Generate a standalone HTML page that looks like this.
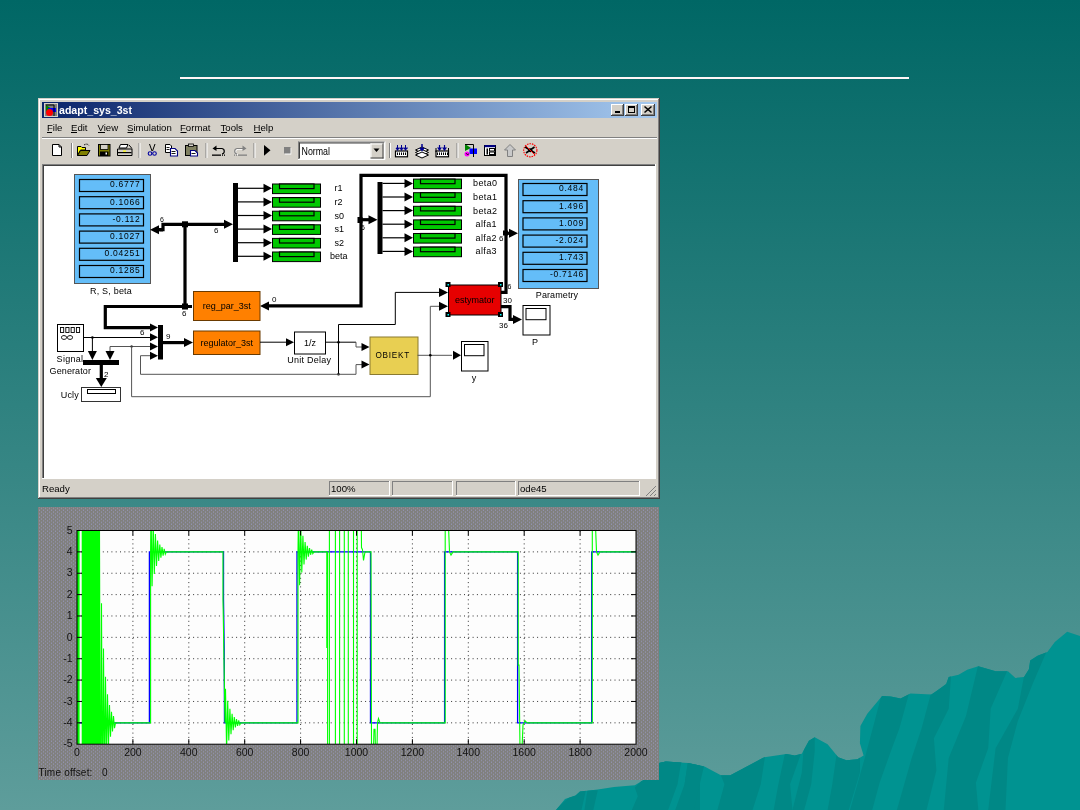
<!DOCTYPE html>
<html><head><meta charset="utf-8"><style>
html,body{margin:0;padding:0;width:1080px;height:810px;overflow:hidden;background:#006765}
svg{display:block}
text{font-family:'Liberation Sans', sans-serif} svg{will-change:transform}
</style></head><body>
<svg width="1080" height="810" viewBox="0 0 1080 810"><defs><linearGradient id="bg" x1="0" y1="0" x2="0" y2="1"><stop offset="0" stop-color="rgb(0,103,101)"/><stop offset="1" stop-color="rgb(94,157,155)"/></linearGradient><linearGradient id="tb" x1="0" y1="0" x2="1" y2="0"><stop offset="0" stop-color="#0a246a"/><stop offset="1" stop-color="#a6caf0"/></linearGradient><pattern id="dots" width="4" height="3.5" patternUnits="userSpaceOnUse"><rect width="4" height="3.5" fill="#80807e"/><rect x="1" y="0.5" width="1" height="1" fill="#9a9ac4"/><rect x="3" y="2.25" width="1" height="1" fill="#9a9ac4"/></pattern></defs><rect x="0" y="0" width="1080" height="810" fill="url(#bg)" stroke="none" stroke-width="1" /><clipPath id="mc"><polygon points="556,810 565,799 575.6,795.6 580,791.6 584.4,791.1 597.8,789.6 614,787.1 634.8,785.2 643.7,780 655,766 659,763 665.8,761.4 688,763 704.5,766.6 720.9,775.3 730.3,775.3 764.3,757.2 786.6,754.1 794.8,755.6 801.8,753.7 808.9,740.8 814.7,737.3 827.6,744.3 838.2,757.2 846.4,760.2 857.4,759.3 863.6,755.6 859.9,743.3 860.4,726 867.3,713.7 882.1,695.9 890.7,696.4 900.6,698.4 910.5,693.4 931.4,694.4 937.6,690.2 946.2,684 948.7,677.1 958.6,674.7 967.2,669.7 978.3,666.3 995.6,671.2 1008,671.2 1015.4,677.9 1024,677.1 1028.9,669.2 1030.2,660.6 1037.6,655.7 1047.4,652 1054.8,642.1 1067.2,631.7 1080,635.9 1080,810"/></clipPath><polygon points="556,810 565,799 575.6,795.6 580,791.6 584.4,791.1 597.8,789.6 614,787.1 634.8,785.2 643.7,780 655,766 659,763 665.8,761.4 688,763 704.5,766.6 720.9,775.3 730.3,775.3 764.3,757.2 786.6,754.1 794.8,755.6 801.8,753.7 808.9,740.8 814.7,737.3 827.6,744.3 838.2,757.2 846.4,760.2 857.4,759.3 863.6,755.6 859.9,743.3 860.4,726 867.3,713.7 882.1,695.9 890.7,696.4 900.6,698.4 910.5,693.4 931.4,694.4 937.6,690.2 946.2,684 948.7,677.1 958.6,674.7 967.2,669.7 978.3,666.3 995.6,671.2 1008,671.2 1015.4,677.9 1024,677.1 1028.9,669.2 1030.2,660.6 1037.6,655.7 1047.4,652 1054.8,642.1 1067.2,631.7 1080,635.9 1080,810" fill="#009391" stroke="none" stroke-width="1" /><g clip-path="url(#mc)" fill="#007f7d"><polygon points="554.8148148148148,809.9259259259259 577.0370370370371,790.3703703703703 585.9259259259259,790.3703703703703 581.4814814814815,809.9259259259259" fill="#008886" stroke="none" stroke-width="1" /><polygon points="587.4074074074074,790.3703703703703 597.7777777777778,790.3703703703703 593.3333333333334,809.9259259259259 584.4444444444445,809.9259259259259" fill="#008886" stroke="none" stroke-width="1" /><polygon points="634.8148148148148,787.4074074074074 661.4814814814815,760.7407407407408 682.2222222222222,760.7407407407408 673.3333333333334,784.4444444444445 664.4444444444445,809.9259259259259 631.8518518518518,809.9259259259259 637.7777777777778,796.2962962962963" fill="#008886" stroke="none" stroke-width="1" /><polygon points="688.1481481481482,760.7407407407408 700.0,762.2222222222222 700.0,809.9259259259259 680.7407407407408,809.9259259259259" fill="#008886" stroke="none" stroke-width="1" /><polygon points="640.0,756.0225140712946 682.2138836772983,756.0225140712946 677.5234521575985,784.1651031894935 668.1425891181989,809.9624765478424 640.0,809.9624765478424" fill="#008886" stroke="none" stroke-width="1" /><polygon points="688.0769230769231,760.7129455909944 704.4934333958724,764.2307692307693 698.6303939962477,788.8555347091933 693.9399624765479,809.9624765478424 675.1782363977486,809.9624765478424 684.5590994371482,784.1651031894935" fill="#008886" stroke="none" stroke-width="1" /><polygon points="719.7373358348968,772.439024390244 765.46904315197,753.6772983114447 760.7786116322702,784.1651031894935 752.5703564727955,809.9624765478424 717.3921200750469,809.9624765478424 724.4277673545967,784.1651031894935" fill="#008886" stroke="none" stroke-width="1" /><polygon points="785.4033771106942,751.3320825515948 801.8198874296436,751.3320825515948 790.093808630394,784.1651031894935 792.439024390244,809.9624765478424 773.6772983114447,809.9624765478424 778.3677298311445,784.1651031894935" fill="#008886" stroke="none" stroke-width="1" /><polygon points="804.1651031894935,741.9512195121952 814.718574108818,734.9155722326454 814.718574108818,751.3320825515948 811.2007504690431,784.1651031894935 804.1651031894935,809.9624765478424 792.439024390244,809.9624765478424 801.8198874296436,772.439024390244" fill="#008886" stroke="none" stroke-width="1" /><polygon points="836.9981238273921,751.3320825515948 859.9812382739212,756.0225140712946 859.9812382739212,772.439024390244 848.7242026266416,809.9624765478424 827.6172607879924,809.9624765478424 832.3076923076923,784.1651031894935" fill="#008886" stroke="none" stroke-width="1" /><polygon points="882.0829220138203,692.6752221125371 909.2300098716684,692.6752221125371 899.3583415597236,728.4600197433366 891.954590325765,748.2033563672261 879.6150049358341,782.7541954590326 872.2112537018756,809.9012833168806 850.0,809.9012833168806 864.8075024679171,758.0750246791708 874.6791707798618,721.0562685093781" fill="#008886" stroke="none" stroke-width="1" /><polygon points="931.4412635735439,691.4412635735439 951.1846001974334,674.1658440276407 948.7166831194472,708.7166831194472 933.9091806515302,738.3316880552813 936.3770977295163,770.4146100691016 926.5054294175716,809.9012833168806 896.8904244817375,809.9012833168806 911.6979269496545,758.0750246791708 921.5695952615993,728.4600197433366" fill="#008886" stroke="none" stroke-width="1" /><polygon points="978.3316880552813,664.2941757156959 1007.9466929911155,669.2300098716684 990.6712734452123,708.7166831194472 988.2033563672261,748.2033563672261 975.8637709772952,782.7541954590326 978.3316880552813,809.9012833168806 943.7808489634748,809.9012833168806 948.7166831194472,758.0750246791708 965.9921026653504,716.1204343534057" fill="#008886" stroke="none" stroke-width="1" /><polygon points="1027.690029615005,656.8904244817375 1047.4333662388945,649.4866732477789 1032.6258637709773,684.0375123395854 1017.8183613030602,721.0562685093781 1007.9466929911155,758.0750246791708 1005.4787759131293,809.9012833168806 988.2033563672261,809.9012833168806 995.6071076011847,748.2033563672261 1017.8183613030602,708.7166831194472" fill="#008886" stroke="none" stroke-width="1" /></g><linearGradient id="mg" x1="0" y1="0" x2="1" y2="0"><stop offset="0" stop-color="#009896" stop-opacity="0"/><stop offset="1" stop-color="#009896" stop-opacity="0.5"/></linearGradient><rect x="180" y="77" width="729" height="2" fill="#fff6f6" stroke="none" stroke-width="1" /><rect x="38" y="98" width="622" height="401" fill="#d4d0c8" stroke="none" stroke-width="1" /><rect x="38" y="98" width="622" height="1" fill="#d4d0c8" stroke="none" stroke-width="1" /><rect x="39" y="99" width="620" height="1" fill="#ffffff" stroke="none" stroke-width="1" /><rect x="39" y="99" width="1" height="399" fill="#ffffff" stroke="none" stroke-width="1" /><rect x="659" y="98" width="1" height="401" fill="#404040" stroke="none" stroke-width="1" /><rect x="38" y="498" width="622" height="1" fill="#404040" stroke="none" stroke-width="1" /><rect x="658" y="99" width="1" height="399" fill="#808080" stroke="none" stroke-width="1" /><rect x="39" y="497" width="620" height="1" fill="#808080" stroke="none" stroke-width="1" /><rect x="42" y="102" width="615" height="16" fill="url(#tb)" stroke="none" stroke-width="1" /><text x="59" y="114" font-size="10.6" text-anchor="start" fill="#fff" font-weight="bold" >adapt_sys_3st</text><rect x="44" y="103" width="14" height="14" fill="#d4d0c8" stroke="none" stroke-width="1" /><rect x="45" y="104" width="12" height="12" fill="#808080" stroke="none" stroke-width="1" /><polygon points="46,105 46,112 52,109" fill="#008000" stroke="none" stroke-width="1" /><rect x="48" y="108" width="8" height="4" fill="#0000ff" stroke="none" stroke-width="1" /><circle cx="49.5" cy="112.5" r="3.5" fill="#ff0000"/><polyline points="46,105 54,105 54,116" fill="none" stroke="#000" stroke-width="1" /><rect x="611" y="104" width="13" height="12" fill="#d4d0c8" stroke="none" stroke-width="1" /><rect x="611" y="104" width="13" height="1" fill="#fff" stroke="none" stroke-width="1" /><rect x="611" y="104" width="1" height="12" fill="#fff" stroke="none" stroke-width="1" /><rect x="611" y="115" width="13" height="1" fill="#404040" stroke="none" stroke-width="1" /><rect x="623" y="104" width="1" height="12" fill="#404040" stroke="none" stroke-width="1" /><rect x="612" y="114" width="11" height="1" fill="#808080" stroke="none" stroke-width="1" /><rect x="622" y="105" width="1" height="10" fill="#808080" stroke="none" stroke-width="1" /><rect x="625" y="104" width="13" height="12" fill="#d4d0c8" stroke="none" stroke-width="1" /><rect x="625" y="104" width="13" height="1" fill="#fff" stroke="none" stroke-width="1" /><rect x="625" y="104" width="1" height="12" fill="#fff" stroke="none" stroke-width="1" /><rect x="625" y="115" width="13" height="1" fill="#404040" stroke="none" stroke-width="1" /><rect x="637" y="104" width="1" height="12" fill="#404040" stroke="none" stroke-width="1" /><rect x="626" y="114" width="11" height="1" fill="#808080" stroke="none" stroke-width="1" /><rect x="636" y="105" width="1" height="10" fill="#808080" stroke="none" stroke-width="1" /><rect x="641" y="104" width="14" height="12" fill="#d4d0c8" stroke="none" stroke-width="1" /><rect x="641" y="104" width="14" height="1" fill="#fff" stroke="none" stroke-width="1" /><rect x="641" y="104" width="1" height="12" fill="#fff" stroke="none" stroke-width="1" /><rect x="641" y="115" width="14" height="1" fill="#404040" stroke="none" stroke-width="1" /><rect x="654" y="104" width="1" height="12" fill="#404040" stroke="none" stroke-width="1" /><rect x="642" y="114" width="12" height="1" fill="#808080" stroke="none" stroke-width="1" /><rect x="653" y="105" width="1" height="10" fill="#808080" stroke="none" stroke-width="1" /><rect x="615" y="111" width="5" height="2" fill="#000" stroke="none" stroke-width="1" /><rect x="628.5" y="106.5" width="6" height="6" fill="none" stroke="#000" stroke-width="1" /><rect x="628" y="106" width="7" height="2" fill="#000" stroke="none" stroke-width="1" /><line x1="644.5" y1="106.5" x2="651.5" y2="112.5" stroke="#000" stroke-width="1.6" /><line x1="651.5" y1="106.5" x2="644.5" y2="112.5" stroke="#000" stroke-width="1.6" /><text x="47" y="131" font-size="9.6" text-anchor="start" fill="#000" font-weight="normal" >File</text><text x="71" y="131" font-size="9.6" text-anchor="start" fill="#000" font-weight="normal" >Edit</text><text x="97.5" y="131" font-size="9.6" text-anchor="start" fill="#000" font-weight="normal" >View</text><text x="127" y="131" font-size="9.6" text-anchor="start" fill="#000" font-weight="normal" >Simulation</text><text x="180" y="131" font-size="9.6" text-anchor="start" fill="#000" font-weight="normal" >Format</text><text x="220.5" y="131" font-size="9.6" text-anchor="start" fill="#000" font-weight="normal" >Tools</text><text x="253.5" y="131" font-size="9.6" text-anchor="start" fill="#000" font-weight="normal" >Help</text><rect x="47" y="132" width="5" height="1" fill="#000" stroke="none" stroke-width="1" /><rect x="71" y="132" width="6" height="1" fill="#000" stroke="none" stroke-width="1" /><rect x="98" y="132" width="7" height="1" fill="#000" stroke="none" stroke-width="1" /><rect x="127.5" y="132" width="6" height="1" fill="#000" stroke="none" stroke-width="1" /><rect x="180.5" y="132" width="6" height="1" fill="#000" stroke="none" stroke-width="1" /><rect x="221" y="132" width="6" height="1" fill="#000" stroke="none" stroke-width="1" /><rect x="254" y="132" width="7" height="1" fill="#000" stroke="none" stroke-width="1" /><rect x="42" y="137" width="615" height="1" fill="#808080" stroke="none" stroke-width="1" /><rect x="42" y="138" width="615" height="1" fill="#ffffff" stroke="none" stroke-width="1" /><rect x="71" y="143" width="1" height="15" fill="#808080" stroke="none" stroke-width="1" /><rect x="72" y="143" width="1" height="15" fill="#ffffff" stroke="none" stroke-width="1" /><rect x="138.5" y="143" width="1" height="15" fill="#808080" stroke="none" stroke-width="1" /><rect x="139.5" y="143" width="1" height="15" fill="#ffffff" stroke="none" stroke-width="1" /><rect x="205.5" y="143" width="1" height="15" fill="#808080" stroke="none" stroke-width="1" /><rect x="206.5" y="143" width="1" height="15" fill="#ffffff" stroke="none" stroke-width="1" /><rect x="253.5" y="143" width="1" height="15" fill="#808080" stroke="none" stroke-width="1" /><rect x="254.5" y="143" width="1" height="15" fill="#ffffff" stroke="none" stroke-width="1" /><rect x="389" y="143" width="1" height="15" fill="#808080" stroke="none" stroke-width="1" /><rect x="390" y="143" width="1" height="15" fill="#ffffff" stroke="none" stroke-width="1" /><rect x="456.5" y="143" width="1" height="15" fill="#808080" stroke="none" stroke-width="1" /><rect x="457.5" y="143" width="1" height="15" fill="#ffffff" stroke="none" stroke-width="1" /><path d="M52.5,144.5 H59 L61.5,147 V155.5 H52.5 Z" fill="#fff" stroke="#000" stroke-width="1"/><path d="M59,144.5 V147 H61.5" fill="none" stroke="#000" stroke-width="1"/><path d="M77.5,146.5 H81 L82,147.5 H85.5 V150 H80.5 L77.5,155.5 Z" fill="#ffff00" stroke="#000" stroke-width="1"/><path d="M77.5,155.5 L80.5,150.5 H90 L87,155.5 Z" fill="#808000" stroke="#000" stroke-width="1"/><path d="M84,145 Q87,143 89,145.5" fill="none" stroke="#000" stroke-width="1" stroke-dasharray="1.5,1"/><rect x="98.5" y="144.5" width="11.5" height="11.5" fill="#808000" stroke="#000" stroke-width="1" /><rect x="100.5" y="144.5" width="7.5" height="5" fill="#d4d0c8" stroke="#000" stroke-width="0.8" /><rect x="100" y="151.5" width="8.5" height="4.5" fill="#000" stroke="none" stroke-width="1" /><rect x="105.5" y="152.5" width="1.5" height="2" fill="#fff" stroke="none" stroke-width="1" /><path d="M120.5,144.5 H128 L126.5,148 H119 Z" fill="#fff" stroke="#000" stroke-width="1"/><path d="M117.5,149 H132 V155.5 H117.5 Z" fill="#d4d0c8" stroke="#000" stroke-width="1"/><rect x="118" y="152" width="13.5" height="1.2" fill="#000" stroke="none" stroke-width="1" /><rect x="123" y="150.5" width="3" height="1.2" fill="#ffff00" stroke="none" stroke-width="1" /><path d="M129,145 L132,148.5" stroke="#000" stroke-width="1"/><path d="M149.5,144 L152,151 M155,144 L152.5,151" stroke="#000" stroke-width="1" fill="none"/><circle cx="150" cy="153.5" r="1.8" fill="none" stroke="#0000a0" stroke-width="1.1"/><circle cx="154.5" cy="153.5" r="1.8" fill="none" stroke="#0000a0" stroke-width="1.1"/><path d="M165.5,144.5 H170 L171.5,146 V152.5 H165.5 Z" fill="#fff" stroke="#000" stroke-width="1"/><rect x="166.5" y="147" width="3" height="0.9" fill="#000" stroke="none" stroke-width="1" /><rect x="166.5" y="149" width="3" height="0.9" fill="#000" stroke="none" stroke-width="1" /><path d="M170.5,148.5 H175 L177.5,151 V156 H170.5 Z" fill="#fff" stroke="#000080" stroke-width="1.1"/><rect x="171.5" y="151" width="4" height="0.9" fill="#000" stroke="none" stroke-width="1" /><rect x="171.5" y="153" width="4" height="0.9" fill="#000" stroke="none" stroke-width="1" /><rect x="185.5" y="145.5" width="11.5" height="10" fill="#808060" stroke="#000" stroke-width="1" /><rect x="188.5" y="144" width="5" height="2.5" fill="#d4d0c8" stroke="#000" stroke-width="0.8" /><path d="M190.5,150.5 H195 L197.5,153 V156 H190.5 Z" fill="#fff" stroke="#000080" stroke-width="1.1"/><rect x="191.5" y="153" width="4" height="0.9" fill="#000" stroke="none" stroke-width="1" /><path d="M216,148.5 H222 A2.8,2.8 0 0 1 222,154" fill="none" stroke="#000" stroke-width="1.2"/><polygon points="212.5,148.5 216.5,145.5 216.5,151" fill="#000" stroke="none" stroke-width="1" /><rect x="212" y="154.5" width="9" height="1.3" fill="#000" stroke="none" stroke-width="1" /><rect x="222" y="154.5" width="1" height="1.3" fill="#000" stroke="none" stroke-width="1" /><rect x="224" y="154.5" width="1" height="1.3" fill="#000" stroke="none" stroke-width="1" /><path d="M243,148.5 H237 A2.8,2.8 0 0 0 237,154" fill="none" stroke="#fff" stroke-width="1.2" transform="translate(0.7,0.7)"/><path d="M243,148.5 H237 A2.8,2.8 0 0 0 237,154" fill="none" stroke="#808080" stroke-width="1.2"/><polygon points="246.5,148.5 242.5,145.5 242.5,151" fill="#808080" stroke="none" stroke-width="1" /><rect x="238" y="154.5" width="9" height="1.3" fill="#808080" stroke="none" stroke-width="1" /><rect x="234" y="154.5" width="1" height="1.3" fill="#808080" stroke="none" stroke-width="1" /><rect x="236" y="154.5" width="1" height="1.3" fill="#808080" stroke="none" stroke-width="1" /><polygon points="264,145 270.5,150.3 264,155.8" fill="#000" stroke="none" stroke-width="1" /><rect x="284.8" y="148" width="6.5" height="6.5" fill="#fff" stroke="none" stroke-width="1" /><rect x="284" y="147" width="6.5" height="6.5" fill="#808080" stroke="none" stroke-width="1" /><rect x="298" y="141.5" width="87" height="18" fill="#fff" stroke="none" stroke-width="1" /><rect x="298" y="141.5" width="87" height="1" fill="#808080" stroke="none" stroke-width="1" /><rect x="298" y="141.5" width="1" height="18" fill="#808080" stroke="none" stroke-width="1" /><rect x="299" y="142.5" width="85" height="1" fill="#404040" stroke="none" stroke-width="1" /><rect x="299" y="142.5" width="1" height="16" fill="#404040" stroke="none" stroke-width="1" /><rect x="298" y="159" width="87" height="1" fill="#fff" stroke="none" stroke-width="1" /><rect x="384.5" y="141.5" width="1" height="18" fill="#fff" stroke="none" stroke-width="1" /><rect x="370.5" y="143.5" width="13" height="15" fill="#d4d0c8" stroke="none" stroke-width="1" /><rect x="370.5" y="143.5" width="13" height="1" fill="#fff" stroke="none" stroke-width="1" /><rect x="370.5" y="143.5" width="1" height="15" fill="#fff" stroke="none" stroke-width="1" /><rect x="370.5" y="157.5" width="13" height="1" fill="#404040" stroke="none" stroke-width="1" /><rect x="382.5" y="143.5" width="1" height="15" fill="#404040" stroke="none" stroke-width="1" /><polygon points="373.5,148.5 379.5,148.5 376.5,152" fill="#000" stroke="none" stroke-width="1" /><text x="301.5" y="155" font-size="11.5" text-anchor="start" fill="#000" font-weight="normal" textLength="28.5" lengthAdjust="spacingAndGlyphs">Normal</text><rect x="395.5" y="151" width="12" height="5.8" fill="#fff" stroke="#000" stroke-width="1.2" /><rect x="397" y="152.5" width="1" height="2.5" fill="#000" stroke="none" stroke-width="1" /><rect x="399" y="152.5" width="1" height="2.5" fill="#000" stroke="none" stroke-width="1" /><rect x="401" y="152.5" width="1" height="2.5" fill="#000" stroke="none" stroke-width="1" /><rect x="403" y="152.5" width="1" height="2.5" fill="#000" stroke="none" stroke-width="1" /><rect x="405" y="152.5" width="1" height="2.5" fill="#000" stroke="none" stroke-width="1" /><line x1="397.5" y1="145" x2="397.5" y2="150" stroke="#000090" stroke-width="1" /><polygon points="395.5,148 399.5,148 397.5,151" fill="#000090" stroke="none" stroke-width="1" /><line x1="401.5" y1="145" x2="401.5" y2="150" stroke="#000090" stroke-width="1" /><polygon points="399.5,148 403.5,148 401.5,151" fill="#000090" stroke="none" stroke-width="1" /><line x1="405.5" y1="145" x2="405.5" y2="150" stroke="#000090" stroke-width="1" /><polygon points="403.5,148 407.5,148 405.5,151" fill="#000090" stroke="none" stroke-width="1" /><line x1="396" y1="148" x2="408" y2="148" stroke="#000090" stroke-width="0.8" /><polygon points="415.5,150 422,147 428.5,150 422,153" fill="#fff" stroke="#000" stroke-width="1" /><polygon points="415.5,152.5 422,149.5 428.5,152.5 422,155.5" fill="#fff" stroke="#000" stroke-width="1" /><polygon points="415.5,155 422,152 428.5,155 422,158" fill="#fff" stroke="#000" stroke-width="1" /><line x1="422" y1="144" x2="422" y2="150" stroke="#000090" stroke-width="1.5" /><polygon points="419,148 425,148 422,151.5" fill="#000090" stroke="none" stroke-width="1" /><rect x="436.0" y="151" width="12.5" height="5.8" fill="#fff" stroke="#000" stroke-width="1.2" /><rect x="437" y="152.5" width="1" height="2.5" fill="#000" stroke="none" stroke-width="1" /><rect x="439" y="152.5" width="1" height="2.5" fill="#000" stroke="none" stroke-width="1" /><rect x="441" y="152.5" width="1" height="2.5" fill="#000" stroke="none" stroke-width="1" /><rect x="443" y="152.5" width="1" height="2.5" fill="#000" stroke="none" stroke-width="1" /><rect x="445" y="152.5" width="1" height="2.5" fill="#000" stroke="none" stroke-width="1" /><rect x="447" y="152.5" width="1" height="2.5" fill="#000" stroke="none" stroke-width="1" /><rect x="435.5" y="148" width="1" height="4" fill="#000" stroke="none" stroke-width="1" /><rect x="448" y="148" width="1" height="4" fill="#000" stroke="none" stroke-width="1" /><line x1="439.5" y1="145" x2="439.5" y2="150" stroke="#000090" stroke-width="1.2" /><polygon points="437.0,147.5 442.0,147.5 439.5,151" fill="#000090" stroke="none" stroke-width="1" /><line x1="444.5" y1="145" x2="444.5" y2="150" stroke="#000090" stroke-width="1.2" /><polygon points="442.0,147.5 447.0,147.5 444.5,151" fill="#000090" stroke="none" stroke-width="1" /><polygon points="465,144 465,151 471,148" fill="#008000" stroke="none" stroke-width="1" /><rect x="469.5" y="148.5" width="7.5" height="5.5" fill="#0000ff" stroke="none" stroke-width="1" /><circle cx="467" cy="154" r="2.5" fill="#ff00ff"/><polyline points="465,144.5 473.5,144.5 473.5,157" fill="none" stroke="#000" stroke-width="1" /><path d="M466,153 L467,154.5 L469,154" stroke="#000" stroke-width="0.8" fill="none"/><rect x="484.5" y="145.5" width="11" height="10" fill="#fff" stroke="#000" stroke-width="1" /><rect x="484.5" y="145" width="11" height="2.2" fill="#000080" stroke="none" stroke-width="1" /><rect x="486.5" y="148.5" width="1.5" height="6" fill="#000" stroke="none" stroke-width="1" /><rect x="489.5" y="148.5" width="5" height="2.5" fill="none" stroke="#000" stroke-width="1" /><rect x="489.5" y="152" width="5" height="2.5" fill="none" stroke="#000" stroke-width="1" /><polygon points="504.5,150 510,144.5 515.5,150 512.5,150 512.5,156.5 507.5,156.5 507.5,150" fill="#c8c8c8" stroke="#808080" stroke-width="1" /><circle cx="530.3" cy="150.3" r="6.6" fill="none" stroke="#ff0000" stroke-width="1.1" stroke-dasharray="1.6,0.9"/><path d="M525,147 L535,153 M526,153 L534.5,147" stroke="#000" stroke-width="1.6"/><circle cx="530.3" cy="150.3" r="2" fill="#000"/><line x1="525.5" y1="145.5" x2="535" y2="155" stroke="#ff0000" stroke-width="1" /><rect x="42" y="164" width="614" height="315" fill="#ffffff" stroke="none" stroke-width="1" /><rect x="42" y="164" width="614" height="1" fill="#808080" stroke="none" stroke-width="1" /><rect x="42" y="164" width="1" height="315" fill="#808080" stroke="none" stroke-width="1" /><rect x="43" y="165" width="612" height="1" fill="#404040" stroke="none" stroke-width="1" /><rect x="43" y="165" width="1" height="313" fill="#404040" stroke="none" stroke-width="1" /><rect x="655" y="164" width="1" height="315" fill="#ffffff" stroke="none" stroke-width="1" /><rect x="42" y="478" width="614" height="1" fill="#ffffff" stroke="none" stroke-width="1" /><text x="42" y="492" font-size="9.6" text-anchor="start" fill="#000" font-weight="normal" >Ready</text><rect x="329" y="481" width="61" height="15" fill="#d4d0c8" stroke="none" stroke-width="1" /><rect x="329" y="481" width="61" height="1" fill="#808080" stroke="none" stroke-width="1" /><rect x="329" y="481" width="1" height="15" fill="#808080" stroke="none" stroke-width="1" /><rect x="329" y="495" width="61" height="1" fill="#ffffff" stroke="none" stroke-width="1" /><rect x="389" y="481" width="1" height="15" fill="#ffffff" stroke="none" stroke-width="1" /><text x="331" y="492" font-size="9.6" text-anchor="start" fill="#000" font-weight="normal" >100%</text><rect x="392" y="481" width="61" height="15" fill="#d4d0c8" stroke="none" stroke-width="1" /><rect x="392" y="481" width="61" height="1" fill="#808080" stroke="none" stroke-width="1" /><rect x="392" y="481" width="1" height="15" fill="#808080" stroke="none" stroke-width="1" /><rect x="392" y="495" width="61" height="1" fill="#ffffff" stroke="none" stroke-width="1" /><rect x="452" y="481" width="1" height="15" fill="#ffffff" stroke="none" stroke-width="1" /><rect x="456" y="481" width="60" height="15" fill="#d4d0c8" stroke="none" stroke-width="1" /><rect x="456" y="481" width="60" height="1" fill="#808080" stroke="none" stroke-width="1" /><rect x="456" y="481" width="1" height="15" fill="#808080" stroke="none" stroke-width="1" /><rect x="456" y="495" width="60" height="1" fill="#ffffff" stroke="none" stroke-width="1" /><rect x="515" y="481" width="1" height="15" fill="#ffffff" stroke="none" stroke-width="1" /><rect x="518" y="481" width="122" height="15" fill="#d4d0c8" stroke="none" stroke-width="1" /><rect x="518" y="481" width="122" height="1" fill="#808080" stroke="none" stroke-width="1" /><rect x="518" y="481" width="1" height="15" fill="#808080" stroke="none" stroke-width="1" /><rect x="518" y="495" width="122" height="1" fill="#ffffff" stroke="none" stroke-width="1" /><rect x="639" y="481" width="1" height="15" fill="#ffffff" stroke="none" stroke-width="1" /><text x="520" y="492" font-size="9.6" text-anchor="start" fill="#000" font-weight="normal" >ode45</text><line x1="646" y1="496" x2="656" y2="486" stroke="#808080" stroke-width="1" /><line x1="650" y1="496" x2="656" y2="490" stroke="#808080" stroke-width="1" /><line x1="654" y1="496" x2="656" y2="494" stroke="#808080" stroke-width="1" /><rect x="74.5" y="174.5" width="76" height="109" fill="#64bdf8" stroke="#555" stroke-width="1" /><rect x="79.5" y="179.5" width="64" height="12" fill="#64bdf8" stroke="#000" stroke-width="1.2" /><text x="140.5" y="187.3" font-size="8.5" text-anchor="end" fill="#000" font-weight="normal" letter-spacing="0.75">0.6777</text><rect x="79.5" y="196.7" width="64" height="12" fill="#64bdf8" stroke="#000" stroke-width="1.2" /><text x="140.5" y="204.5" font-size="8.5" text-anchor="end" fill="#000" font-weight="normal" letter-spacing="0.75">0.1066</text><rect x="79.5" y="213.9" width="64" height="12" fill="#64bdf8" stroke="#000" stroke-width="1.2" /><text x="140.5" y="221.70000000000002" font-size="8.5" text-anchor="end" fill="#000" font-weight="normal" letter-spacing="0.75">-0.112</text><rect x="79.5" y="231.1" width="64" height="12" fill="#64bdf8" stroke="#000" stroke-width="1.2" /><text x="140.5" y="238.9" font-size="8.5" text-anchor="end" fill="#000" font-weight="normal" letter-spacing="0.75">0.1027</text><rect x="79.5" y="248.3" width="64" height="12" fill="#64bdf8" stroke="#000" stroke-width="1.2" /><text x="140.5" y="256.1" font-size="8.5" text-anchor="end" fill="#000" font-weight="normal" letter-spacing="0.75">0.04251</text><rect x="79.5" y="265.5" width="64" height="12" fill="#64bdf8" stroke="#000" stroke-width="1.2" /><text x="140.5" y="273.3" font-size="8.5" text-anchor="end" fill="#000" font-weight="normal" letter-spacing="0.75">0.1285</text><text x="111" y="293.7" font-size="9" text-anchor="middle" fill="#000" font-weight="normal" letter-spacing="0.2">R, S, beta</text><rect x="518.5" y="179.5" width="80" height="109" fill="#64bdf8" stroke="#555" stroke-width="1" /><rect x="523.0" y="183.5" width="64.0" height="12" fill="#64bdf8" stroke="#000" stroke-width="1.2" /><text x="584.0" y="191.3" font-size="8.5" text-anchor="end" fill="#000" font-weight="normal" letter-spacing="0.75">0.484</text><rect x="523.0" y="200.7" width="64.0" height="12" fill="#64bdf8" stroke="#000" stroke-width="1.2" /><text x="584.0" y="208.5" font-size="8.5" text-anchor="end" fill="#000" font-weight="normal" letter-spacing="0.75">1.496</text><rect x="523.0" y="217.9" width="64.0" height="12" fill="#64bdf8" stroke="#000" stroke-width="1.2" /><text x="584.0" y="225.70000000000002" font-size="8.5" text-anchor="end" fill="#000" font-weight="normal" letter-spacing="0.75">1.009</text><rect x="523.0" y="235.1" width="64.0" height="12" fill="#64bdf8" stroke="#000" stroke-width="1.2" /><text x="584.0" y="242.9" font-size="8.5" text-anchor="end" fill="#000" font-weight="normal" letter-spacing="0.75">-2.024</text><rect x="523.0" y="252.3" width="64.0" height="12" fill="#64bdf8" stroke="#000" stroke-width="1.2" /><text x="584.0" y="260.1" font-size="8.5" text-anchor="end" fill="#000" font-weight="normal" letter-spacing="0.75">1.743</text><rect x="523.0" y="269.5" width="64.0" height="12" fill="#64bdf8" stroke="#000" stroke-width="1.2" /><text x="584.0" y="277.3" font-size="8.5" text-anchor="end" fill="#000" font-weight="normal" letter-spacing="0.75">-0.7146</text><text x="557" y="298" font-size="9" text-anchor="middle" fill="#000" font-weight="normal" letter-spacing="0.1">Parametry</text><rect x="233" y="183" width="5" height="79" fill="#000" stroke="none" stroke-width="1" /><line x1="238" y1="188.3" x2="264" y2="188.3" stroke="#000" stroke-width="1.2" /><polygon points="263.5,183.8 272,188.3 263.5,192.8" fill="#000" stroke="none" stroke-width="1" /><rect x="272.5" y="184.0" width="48" height="9.6" fill="#00c800" stroke="#000" stroke-width="1" /><rect x="279.5" y="184.0" width="34.5" height="4.6" fill="#00c800" stroke="#000" stroke-width="1.2" /><text x="334.5" y="191.3" font-size="9" text-anchor="start" fill="#000" font-weight="normal" >r1</text><line x1="238" y1="201.9" x2="264" y2="201.9" stroke="#000" stroke-width="1.2" /><polygon points="263.5,197.4 272,201.9 263.5,206.4" fill="#000" stroke="none" stroke-width="1" /><rect x="272.5" y="197.6" width="48" height="9.6" fill="#00c800" stroke="#000" stroke-width="1" /><rect x="279.5" y="197.6" width="34.5" height="4.6" fill="#00c800" stroke="#000" stroke-width="1.2" /><text x="334.5" y="204.9" font-size="9" text-anchor="start" fill="#000" font-weight="normal" >r2</text><line x1="238" y1="215.5" x2="264" y2="215.5" stroke="#000" stroke-width="1.2" /><polygon points="263.5,211.0 272,215.5 263.5,220.0" fill="#000" stroke="none" stroke-width="1" /><rect x="272.5" y="211.2" width="48" height="9.6" fill="#00c800" stroke="#000" stroke-width="1" /><rect x="279.5" y="211.2" width="34.5" height="4.6" fill="#00c800" stroke="#000" stroke-width="1.2" /><text x="334.5" y="218.5" font-size="9" text-anchor="start" fill="#000" font-weight="normal" >s0</text><line x1="238" y1="229.10000000000002" x2="264" y2="229.10000000000002" stroke="#000" stroke-width="1.2" /><polygon points="263.5,224.60000000000002 272,229.10000000000002 263.5,233.60000000000002" fill="#000" stroke="none" stroke-width="1" /><rect x="272.5" y="224.8" width="48" height="9.6" fill="#00c800" stroke="#000" stroke-width="1" /><rect x="279.5" y="224.8" width="34.5" height="4.6" fill="#00c800" stroke="#000" stroke-width="1.2" /><text x="334.5" y="232.10000000000002" font-size="9" text-anchor="start" fill="#000" font-weight="normal" >s1</text><line x1="238" y1="242.70000000000002" x2="264" y2="242.70000000000002" stroke="#000" stroke-width="1.2" /><polygon points="263.5,238.20000000000002 272,242.70000000000002 263.5,247.20000000000002" fill="#000" stroke="none" stroke-width="1" /><rect x="272.5" y="238.4" width="48" height="9.6" fill="#00c800" stroke="#000" stroke-width="1" /><rect x="279.5" y="238.4" width="34.5" height="4.6" fill="#00c800" stroke="#000" stroke-width="1.2" /><text x="334.5" y="245.70000000000002" font-size="9" text-anchor="start" fill="#000" font-weight="normal" >s2</text><line x1="238" y1="256.3" x2="264" y2="256.3" stroke="#000" stroke-width="1.2" /><polygon points="263.5,251.8 272,256.3 263.5,260.8" fill="#000" stroke="none" stroke-width="1" /><rect x="272.5" y="252.0" width="48" height="9.6" fill="#00c800" stroke="#000" stroke-width="1" /><rect x="279.5" y="252.0" width="34.5" height="4.6" fill="#00c800" stroke="#000" stroke-width="1.2" /><text x="330" y="259.3" font-size="9" text-anchor="start" fill="#000" font-weight="normal" >beta</text><rect x="377.5" y="182" width="5" height="72" fill="#000" stroke="none" stroke-width="1" /><line x1="382.5" y1="183.4" x2="405" y2="183.4" stroke="#000" stroke-width="1.2" /><polygon points="404.5,178.9 413,183.4 404.5,187.9" fill="#000" stroke="none" stroke-width="1" /><rect x="413.5" y="179.1" width="48" height="9.6" fill="#00c800" stroke="#000" stroke-width="1" /><rect x="420.5" y="179.1" width="34.5" height="4.6" fill="#00c800" stroke="#000" stroke-width="1.2" /><text x="473" y="186.4" font-size="9" text-anchor="start" fill="#000" font-weight="normal" letter-spacing="0.4">beta0</text><line x1="382.5" y1="197.0" x2="405" y2="197.0" stroke="#000" stroke-width="1.2" /><polygon points="404.5,192.5 413,197.0 404.5,201.5" fill="#000" stroke="none" stroke-width="1" /><rect x="413.5" y="192.7" width="48" height="9.6" fill="#00c800" stroke="#000" stroke-width="1" /><rect x="420.5" y="192.7" width="34.5" height="4.6" fill="#00c800" stroke="#000" stroke-width="1.2" /><text x="473" y="200.0" font-size="9" text-anchor="start" fill="#000" font-weight="normal" letter-spacing="0.4">beta1</text><line x1="382.5" y1="210.6" x2="405" y2="210.6" stroke="#000" stroke-width="1.2" /><polygon points="404.5,206.1 413,210.6 404.5,215.1" fill="#000" stroke="none" stroke-width="1" /><rect x="413.5" y="206.29999999999998" width="48" height="9.6" fill="#00c800" stroke="#000" stroke-width="1" /><rect x="420.5" y="206.29999999999998" width="34.5" height="4.6" fill="#00c800" stroke="#000" stroke-width="1.2" /><text x="473" y="213.6" font-size="9" text-anchor="start" fill="#000" font-weight="normal" letter-spacing="0.4">beta2</text><line x1="382.5" y1="224.2" x2="405" y2="224.2" stroke="#000" stroke-width="1.2" /><polygon points="404.5,219.7 413,224.2 404.5,228.7" fill="#000" stroke="none" stroke-width="1" /><rect x="413.5" y="219.89999999999998" width="48" height="9.6" fill="#00c800" stroke="#000" stroke-width="1" /><rect x="420.5" y="219.89999999999998" width="34.5" height="4.6" fill="#00c800" stroke="#000" stroke-width="1.2" /><text x="475.5" y="227.2" font-size="9" text-anchor="start" fill="#000" font-weight="normal" letter-spacing="0.4">alfa1</text><line x1="382.5" y1="237.8" x2="405" y2="237.8" stroke="#000" stroke-width="1.2" /><polygon points="404.5,233.3 413,237.8 404.5,242.3" fill="#000" stroke="none" stroke-width="1" /><rect x="413.5" y="233.5" width="48" height="9.6" fill="#00c800" stroke="#000" stroke-width="1" /><rect x="420.5" y="233.5" width="34.5" height="4.6" fill="#00c800" stroke="#000" stroke-width="1.2" /><text x="475.5" y="240.8" font-size="9" text-anchor="start" fill="#000" font-weight="normal" letter-spacing="0.4">alfa2</text><line x1="382.5" y1="251.4" x2="405" y2="251.4" stroke="#000" stroke-width="1.2" /><polygon points="404.5,246.9 413,251.4 404.5,255.9" fill="#000" stroke="none" stroke-width="1" /><rect x="413.5" y="247.1" width="48" height="9.6" fill="#00c800" stroke="#000" stroke-width="1" /><rect x="420.5" y="247.1" width="34.5" height="4.6" fill="#00c800" stroke="#000" stroke-width="1.2" /><text x="475.5" y="254.4" font-size="9" text-anchor="start" fill="#000" font-weight="normal" letter-spacing="0.4">alfa3</text><polyline points="160,229.7 163,229.7 163,224.3 225,224.3" fill="none" stroke="#000" stroke-width="3.2" /><polygon points="159,225.2 150,229.7 159,234.2" fill="#000" stroke="none" stroke-width="1" /><rect x="157" y="228" width="6" height="3.4" fill="#000" stroke="none" stroke-width="1" /><polygon points="224,219.8 233,224.3 224,228.8" fill="#000" stroke="none" stroke-width="1" /><rect x="182" y="221.3" width="6" height="6" fill="#000" stroke="none" stroke-width="1" /><line x1="185" y1="224" x2="185" y2="306.5" stroke="#000" stroke-width="3.2" /><rect x="182" y="303.5" width="6" height="6" fill="#000" stroke="none" stroke-width="1" /><text x="160" y="222" font-size="7" text-anchor="start" fill="#000" font-weight="normal" >6</text><text x="214" y="232.5" font-size="8" text-anchor="start" fill="#000" font-weight="normal" >6</text><polyline points="192,306.5 105.3,306.5 105.3,327.6 150,327.6" fill="none" stroke="#000" stroke-width="3.2" /><text x="182" y="316" font-size="8" text-anchor="start" fill="#000" font-weight="normal" >6</text><polyline points="268,305.9 361,305.9 361,175.4 506,175.4 506,292.3 500,292.3" fill="none" stroke="#000" stroke-width="3.2" /><polygon points="269,301.4 260,305.9 269,310.4" fill="#000" stroke="none" stroke-width="1" /><text x="272" y="302" font-size="8" text-anchor="start" fill="#000" font-weight="normal" >0</text><rect x="357.5" y="217" width="5" height="6" fill="#000" stroke="none" stroke-width="1" /><line x1="361" y1="219.7" x2="370" y2="219.7" stroke="#000" stroke-width="3.2" /><polygon points="368.5,215.2 377.5,219.7 368.5,224.2" fill="#000" stroke="none" stroke-width="1" /><text x="360.5" y="229.5" font-size="8" text-anchor="start" fill="#000" font-weight="normal" >6</text><rect x="503" y="230.5" width="5" height="5" fill="#000" stroke="none" stroke-width="1" /><line x1="506" y1="233.3" x2="510" y2="233.3" stroke="#000" stroke-width="3.2" /><polygon points="509,228.8 518,233.3 509,237.8" fill="#000" stroke="none" stroke-width="1" /><text x="499" y="241" font-size="8" text-anchor="start" fill="#000" font-weight="normal" >6</text><rect x="193.5" y="291.5" width="66.5" height="29" fill="#ff8000" stroke="#6a3a00" stroke-width="1" /><text x="226.75" y="309.0" font-size="9" text-anchor="middle" fill="#000" font-weight="normal" >reg_par_3st</text><rect x="193.5" y="331.0" width="66.5" height="23.5" fill="#ff8000" stroke="#6a3a00" stroke-width="1" /><text x="226.75" y="345.75" font-size="9" text-anchor="middle" fill="#000" font-weight="normal" >regulator_3st</text><rect x="294.5" y="332.0" width="31" height="22.0" fill="#ffffff" stroke="#000" stroke-width="1" /><text x="310.0" y="346.0" font-size="9" text-anchor="middle" fill="#000" font-weight="normal" >1/z</text><text x="309.3" y="363" font-size="9" text-anchor="middle" fill="#000" font-weight="normal" letter-spacing="0.25">Unit Delay</text><rect x="370.0" y="337.0" width="48.0" height="37.5" fill="#e8cf52" stroke="#8a7a30" stroke-width="1" /><text x="394.0" y="358.75" font-size="8" text-anchor="middle" fill="#000" font-weight="normal" ></text><text x="375.5" y="358.2" font-size="8.2" text-anchor="start" fill="#000" font-weight="normal" font-weight="bold" letter-spacing="0.75">OBIEKT</text><rect x="448.5" y="285.0" width="52.5" height="30.0" fill="#e60000" stroke="#000" stroke-width="1" /><text x="474.75" y="303.0" font-size="9" text-anchor="middle" fill="#000" font-weight="normal" >estymator</text><rect x="445.5" y="282.0" width="5" height="5" fill="#000" stroke="none" stroke-width="1" /><rect x="447.5" y="284.0" width="1.5" height="1.5" fill="#00ffff" stroke="none" stroke-width="1" /><rect x="498.0" y="282.0" width="5" height="5" fill="#000" stroke="none" stroke-width="1" /><rect x="500.0" y="284.0" width="1.5" height="1.5" fill="#00ffff" stroke="none" stroke-width="1" /><rect x="445.5" y="312.0" width="5" height="5" fill="#000" stroke="none" stroke-width="1" /><rect x="447.5" y="314.0" width="1.5" height="1.5" fill="#00ffff" stroke="none" stroke-width="1" /><rect x="498.0" y="312.0" width="5" height="5" fill="#000" stroke="none" stroke-width="1" /><rect x="500.0" y="314.0" width="1.5" height="1.5" fill="#00ffff" stroke="none" stroke-width="1" /><text x="507.5" y="289" font-size="7" text-anchor="start" fill="#000" font-weight="normal" >6</text><text x="503" y="303" font-size="8" text-anchor="start" fill="#000" font-weight="normal" >30</text><text x="499" y="328" font-size="8" text-anchor="start" fill="#000" font-weight="normal" >36</text><polyline points="501,306.7 510,306.7 510,319.4 514,319.4" fill="none" stroke="#000" stroke-width="3.2" /><polygon points="513,314.9 522,319.4 513,323.9" fill="#000" stroke="none" stroke-width="1" /><rect x="523.0" y="305.5" width="27.0" height="29.5" fill="#fff" stroke="#000" stroke-width="1" /><rect x="526.0" y="308.5" width="20.0" height="11.21" fill="#fff" stroke="#000" stroke-width="1" /><text x="535" y="345" font-size="9" text-anchor="middle" fill="#000" font-weight="normal" >P</text><rect x="461.5" y="341.5" width="26.5" height="29.5" fill="#fff" stroke="#000" stroke-width="1" /><rect x="464.5" y="344.5" width="19.5" height="11.21" fill="#fff" stroke="#000" stroke-width="1" /><text x="474" y="381" font-size="9" text-anchor="middle" fill="#000" font-weight="normal" >y</text><rect x="158" y="325" width="5" height="34.5" fill="#000" stroke="none" stroke-width="1" /><polygon points="150,323.6 158,327.6 150,331.6" fill="#000" stroke="none" stroke-width="1" /><polygon points="150,333.2 158,337.2 150,341.2" fill="#000" stroke="none" stroke-width="1" /><polygon points="150,342.4 158,346.4 150,350.4" fill="#000" stroke="none" stroke-width="1" /><polygon points="150,351.7 158,355.7 150,359.7" fill="#000" stroke="none" stroke-width="1" /><line x1="163" y1="342.6" x2="184" y2="342.6" stroke="#000" stroke-width="3.2" /><polygon points="184,338.1 193,342.6 184,347.1" fill="#000" stroke="none" stroke-width="1" /><text x="166" y="339" font-size="8" text-anchor="start" fill="#000" font-weight="normal" >9</text><text x="140" y="335" font-size="8" text-anchor="start" fill="#000" font-weight="normal" >6</text><rect x="57.5" y="324.5" width="26" height="27" fill="#fff" stroke="#000" stroke-width="1" /><rect x="60.5" y="327.5" width="3.2" height="5" fill="none" stroke="#000" stroke-width="0.9" /><rect x="65.8" y="327.5" width="3.2" height="5" fill="none" stroke="#000" stroke-width="0.9" /><rect x="71.1" y="327.5" width="3.2" height="5" fill="none" stroke="#000" stroke-width="0.9" /><rect x="76.4" y="327.5" width="3.2" height="5" fill="none" stroke="#000" stroke-width="0.9" /><path d="M61.5,337.5 C61.5,334.5 66.5,335.5 67,337.5 C67.5,335.5 72.5,334.5 72.5,337.5 C72.5,340 68,340 67,337.5 C66,340 61.5,340 61.5,337.5 Z" fill="none" stroke="#000" stroke-width="1"/><text x="70" y="362" font-size="9" text-anchor="middle" fill="#000" font-weight="normal" letter-spacing="0.3">Signal</text><text x="70.3" y="374" font-size="9" text-anchor="middle" fill="#000" font-weight="normal" letter-spacing="0.1">Generator</text><line x1="83.5" y1="337.5" x2="150" y2="337.5" stroke="#000" stroke-width="1" /><circle cx="92.4" cy="337.5" r="1.3" fill="#000"/><line x1="92.4" y1="337.5" x2="92.4" y2="352" stroke="#000" stroke-width="1" /><polygon points="87.9,351 92.4,360 96.9,351" fill="#000" stroke="none" stroke-width="1" /><polyline points="110,352 110,346.5 150,346.5" fill="none" stroke="#555" stroke-width="1" /><polygon points="105.5,351 110,360 114.5,351" fill="#000" stroke="none" stroke-width="1" /><circle cx="131.6" cy="346.5" r="1.2" fill="#333"/><polyline points="131.6,346.5 131.6,396.7 430.3,396.7 430.3,306.3 440,306.3" fill="none" stroke="#555" stroke-width="1" /><polygon points="439,301.8 448,306.3 439,310.8" fill="#000" stroke="none" stroke-width="1" /><rect x="83" y="360" width="36" height="5" fill="#000" stroke="none" stroke-width="1" /><line x1="101.3" y1="365" x2="101.3" y2="379" stroke="#000" stroke-width="3.2" /><polygon points="95.8,378 101.3,387 106.8,378" fill="#000" stroke="none" stroke-width="1" /><text x="104" y="377" font-size="8" text-anchor="start" fill="#000" font-weight="normal" >2</text><rect x="81.5" y="387.5" width="39" height="14" fill="#fff" stroke="#333" stroke-width="1" /><rect x="87.5" y="389.5" width="28" height="4" fill="#fff" stroke="#000" stroke-width="1" /><text x="79" y="398" font-size="9" text-anchor="end" fill="#000" font-weight="normal" letter-spacing="0.2">Ucly</text><line x1="260" y1="342.2" x2="286" y2="342.2" stroke="#000" stroke-width="1" /><polygon points="286,338.2 294,342.2 286,346.2" fill="#000" stroke="none" stroke-width="1" /><line x1="325.5" y1="342.2" x2="356" y2="342.2" stroke="#000" stroke-width="1" /><polyline points="356,342.2 356,347 362,347" fill="none" stroke="#555" stroke-width="1" /><polygon points="361.5,343.0 369.5,347 361.5,351.0" fill="#000" stroke="none" stroke-width="1" /><line x1="338.5" y1="324.5" x2="338.5" y2="374.3" stroke="#000" stroke-width="1" /><circle cx="338.5" cy="342.2" r="1.3" fill="#000"/><circle cx="338.5" cy="374.3" r="1.3" fill="#000"/><polyline points="150,355.7 140.5,355.7 140.5,374.3 356,374.3 356,364.6 362,364.6" fill="none" stroke="#555" stroke-width="1" /><polygon points="361.5,360.6 369.5,364.6 361.5,368.6" fill="#000" stroke="none" stroke-width="1" /><polyline points="338.5,324.5 395.3,324.5 395.3,292.4 440,292.4" fill="none" stroke="#000" stroke-width="1" /><polygon points="439,287.9 448,292.4 439,296.9" fill="#000" stroke="none" stroke-width="1" /><line x1="417.5" y1="355.3" x2="452" y2="355.3" stroke="#555" stroke-width="1" /><polygon points="453,350.8 461,355.3 453,359.8" fill="#000" stroke="none" stroke-width="1" /><circle cx="430.3" cy="355.3" r="1.3" fill="#000"/><rect x="38" y="507" width="621" height="273" fill="url(#dots)" stroke="none" stroke-width="1" /><rect x="77" y="530.5" width="559" height="213.70000000000005" fill="#fdfdfd" stroke="none" stroke-width="1" /><line x1="132.9" y1="530.5" x2="132.9" y2="744.2" stroke="#333" stroke-width="1" stroke-dasharray="1,3.3"/><line x1="188.8" y1="530.5" x2="188.8" y2="744.2" stroke="#333" stroke-width="1" stroke-dasharray="1,3.3"/><line x1="244.7" y1="530.5" x2="244.7" y2="744.2" stroke="#333" stroke-width="1" stroke-dasharray="1,3.3"/><line x1="300.6" y1="530.5" x2="300.6" y2="744.2" stroke="#333" stroke-width="1" stroke-dasharray="1,3.3"/><line x1="356.5" y1="530.5" x2="356.5" y2="744.2" stroke="#333" stroke-width="1" stroke-dasharray="1,3.3"/><line x1="412.4" y1="530.5" x2="412.4" y2="744.2" stroke="#333" stroke-width="1" stroke-dasharray="1,3.3"/><line x1="468.3" y1="530.5" x2="468.3" y2="744.2" stroke="#333" stroke-width="1" stroke-dasharray="1,3.3"/><line x1="524.2" y1="530.5" x2="524.2" y2="744.2" stroke="#333" stroke-width="1" stroke-dasharray="1,3.3"/><line x1="580.1" y1="530.5" x2="580.1" y2="744.2" stroke="#333" stroke-width="1" stroke-dasharray="1,3.3"/><line x1="77" y1="722.83" x2="636" y2="722.83" stroke="#333" stroke-width="1" stroke-dasharray="1,3.3"/><line x1="77" y1="701.46" x2="636" y2="701.46" stroke="#333" stroke-width="1" stroke-dasharray="1,3.3"/><line x1="77" y1="680.09" x2="636" y2="680.09" stroke="#333" stroke-width="1" stroke-dasharray="1,3.3"/><line x1="77" y1="658.72" x2="636" y2="658.72" stroke="#333" stroke-width="1" stroke-dasharray="1,3.3"/><line x1="77" y1="637.35" x2="636" y2="637.35" stroke="#333" stroke-width="1" stroke-dasharray="1,3.3"/><line x1="77" y1="615.98" x2="636" y2="615.98" stroke="#333" stroke-width="1" stroke-dasharray="1,3.3"/><line x1="77" y1="594.61" x2="636" y2="594.61" stroke="#333" stroke-width="1" stroke-dasharray="1,3.3"/><line x1="77" y1="573.24" x2="636" y2="573.24" stroke="#333" stroke-width="1" stroke-dasharray="1,3.3"/><line x1="77" y1="551.87" x2="636" y2="551.87" stroke="#333" stroke-width="1" stroke-dasharray="1,3.3"/><clipPath id="pc"><rect x="77" y="530" width="559" height="214"/></clipPath><g clip-path="url(#pc)"><polyline points="77,637.35 77.5,637.35 77.5,722.83 149.4,722.83 149.4,551.87 223.5,551.87 223.5,598.884 224.2,648.0350000000001 224.5,722.83 297,722.83 297,551.87 370.5,551.87 370.5,722.83 444.6,722.83 444.6,551.87 517.6,551.87 517.6,722.83 591.7,722.83 591.7,551.87 640,551.87" fill="none" stroke="#0000ff" stroke-width="1.3" /><rect x="77" y="530.5" width="2.6" height="213.70000000000005" fill="#00ff00" stroke="none" stroke-width="1" /><rect x="81.7" y="530.5" width="17.8" height="213.70000000000005" fill="#00ff00" stroke="none" stroke-width="1" /><polyline points="99.5,749.2 99.5,530.5 100.5,874.41 101.5,603.37 102.5,816.98 103.5,648.62 104.5,781.31 105.5,676.74 106.5,759.16 107.5,694.2 108.5,745.39 109.5,705.05 110.5,736.85 111.5,711.78 112.5,731.54 113.5,715.97 114.5,728.24 115.5,722.83 150.6,722.83 150.6,551.87 151,509.13 152.1,586.17 153.2,524.34 154.3,573.96 155.4,534.14 156.5,566.1 157.6,540.45 158.7,561.03 159.8,544.52 160.9,557.77 162.0,547.13 163.1,555.67 164.2,548.82 165.3,554.32 166.4,551.87 223,551.87 223,598.884 225,722.83 225.5,688.64 226.6,750.27 227.7,700.81 228.8,740.5 229.9,708.65 231.0,734.21 232.1,713.7 233.2,730.16 234.3,716.95 235.4,727.55 236.5,719.04 237.6,725.87 238.7,720.39 239.8,724.79 240.9,722.83 298,722.83 298,551.87 298.5,509.13 299.6,585.34 300.7,525.66 301.8,572.4 302.9,535.79 304.0,564.46 305.1,542.01 306.2,559.59 307.3,545.82 308.4,556.61 309.5,548.16 310.6,554.77 311.7,549.6 312.8,553.65 313.9,551.87 326.8,551.87 326.8,648.0350000000001 327.6,551.87 327.6,749.2" fill="none" stroke="#00ff00" stroke-width="1.1" /><line x1="329.4" y1="525.5" x2="329.4" y2="749.2" stroke="#00ff00" stroke-width="1.1" /><line x1="335.4" y1="525.5" x2="335.4" y2="749.2" stroke="#00ff00" stroke-width="1.1" /><line x1="339.6" y1="525.5" x2="339.6" y2="749.2" stroke="#00ff00" stroke-width="1.1" /><line x1="344.3" y1="525.5" x2="344.3" y2="749.2" stroke="#00ff00" stroke-width="1.1" /><line x1="348.3" y1="525.5" x2="348.3" y2="749.2" stroke="#00ff00" stroke-width="1.1" /><line x1="353.5" y1="525.5" x2="353.5" y2="749.2" stroke="#00ff00" stroke-width="1.1" /><line x1="357.2" y1="525.5" x2="357.2" y2="749.2" stroke="#00ff00" stroke-width="1.1" /><polyline points="361.3,525.5 361.5,547.596 362.5,549.733 363.5,560.418 365,551.87 366,551.87 371,551.87 371.5,749.2 373.5,749.2 374,729.241 375,729.241 375.5,749.2 377,749.2 377.5,722.83 378.5,718.556 380,722.83 445.2,722.83 445.2,525.5 448.5,525.5 449.5,551.87 451,555.0755 453,551.87 518.2,551.87 518.2,665.1310000000001 519,665.1310000000001 520,749.2 522,749.2 523,724.967 525,720.693 527,722.83 592.3,722.83 592.3,525.5 595.5,525.5 596.5,551.87 598,555.0755 600,551.87 640,551.87" fill="none" stroke="#00ff00" stroke-width="1.1" /></g><rect x="77" y="530.5" width="559" height="213.70000000000005" fill="none" stroke="#000" stroke-width="1" /><line x1="132.9" y1="530.5" x2="132.9" y2="535.5" stroke="#000" stroke-width="1" /><line x1="132.9" y1="739.2" x2="132.9" y2="744.2" stroke="#000" stroke-width="1" /><line x1="188.8" y1="530.5" x2="188.8" y2="535.5" stroke="#000" stroke-width="1" /><line x1="188.8" y1="739.2" x2="188.8" y2="744.2" stroke="#000" stroke-width="1" /><line x1="244.7" y1="530.5" x2="244.7" y2="535.5" stroke="#000" stroke-width="1" /><line x1="244.7" y1="739.2" x2="244.7" y2="744.2" stroke="#000" stroke-width="1" /><line x1="300.6" y1="530.5" x2="300.6" y2="535.5" stroke="#000" stroke-width="1" /><line x1="300.6" y1="739.2" x2="300.6" y2="744.2" stroke="#000" stroke-width="1" /><line x1="356.5" y1="530.5" x2="356.5" y2="535.5" stroke="#000" stroke-width="1" /><line x1="356.5" y1="739.2" x2="356.5" y2="744.2" stroke="#000" stroke-width="1" /><line x1="412.4" y1="530.5" x2="412.4" y2="535.5" stroke="#000" stroke-width="1" /><line x1="412.4" y1="739.2" x2="412.4" y2="744.2" stroke="#000" stroke-width="1" /><line x1="468.3" y1="530.5" x2="468.3" y2="535.5" stroke="#000" stroke-width="1" /><line x1="468.3" y1="739.2" x2="468.3" y2="744.2" stroke="#000" stroke-width="1" /><line x1="524.2" y1="530.5" x2="524.2" y2="535.5" stroke="#000" stroke-width="1" /><line x1="524.2" y1="739.2" x2="524.2" y2="744.2" stroke="#000" stroke-width="1" /><line x1="580.1" y1="530.5" x2="580.1" y2="535.5" stroke="#000" stroke-width="1" /><line x1="580.1" y1="739.2" x2="580.1" y2="744.2" stroke="#000" stroke-width="1" /><line x1="77" y1="722.83" x2="82" y2="722.83" stroke="#000" stroke-width="1" /><line x1="631" y1="722.83" x2="636" y2="722.83" stroke="#000" stroke-width="1" /><line x1="77" y1="701.46" x2="82" y2="701.46" stroke="#000" stroke-width="1" /><line x1="631" y1="701.46" x2="636" y2="701.46" stroke="#000" stroke-width="1" /><line x1="77" y1="680.09" x2="82" y2="680.09" stroke="#000" stroke-width="1" /><line x1="631" y1="680.09" x2="636" y2="680.09" stroke="#000" stroke-width="1" /><line x1="77" y1="658.72" x2="82" y2="658.72" stroke="#000" stroke-width="1" /><line x1="631" y1="658.72" x2="636" y2="658.72" stroke="#000" stroke-width="1" /><line x1="77" y1="637.35" x2="82" y2="637.35" stroke="#000" stroke-width="1" /><line x1="631" y1="637.35" x2="636" y2="637.35" stroke="#000" stroke-width="1" /><line x1="77" y1="615.98" x2="82" y2="615.98" stroke="#000" stroke-width="1" /><line x1="631" y1="615.98" x2="636" y2="615.98" stroke="#000" stroke-width="1" /><line x1="77" y1="594.61" x2="82" y2="594.61" stroke="#000" stroke-width="1" /><line x1="631" y1="594.61" x2="636" y2="594.61" stroke="#000" stroke-width="1" /><line x1="77" y1="573.24" x2="82" y2="573.24" stroke="#000" stroke-width="1" /><line x1="631" y1="573.24" x2="636" y2="573.24" stroke="#000" stroke-width="1" /><line x1="77" y1="551.87" x2="82" y2="551.87" stroke="#000" stroke-width="1" /><line x1="631" y1="551.87" x2="636" y2="551.87" stroke="#000" stroke-width="1" /><text x="77.0" y="756" font-size="10.5" text-anchor="middle" fill="#111" font-weight="normal" >0</text><text x="132.9" y="756" font-size="10.5" text-anchor="middle" fill="#111" font-weight="normal" >200</text><text x="188.8" y="756" font-size="10.5" text-anchor="middle" fill="#111" font-weight="normal" >400</text><text x="244.7" y="756" font-size="10.5" text-anchor="middle" fill="#111" font-weight="normal" >600</text><text x="300.6" y="756" font-size="10.5" text-anchor="middle" fill="#111" font-weight="normal" >800</text><text x="356.5" y="756" font-size="10.5" text-anchor="middle" fill="#111" font-weight="normal" >1000</text><text x="412.4" y="756" font-size="10.5" text-anchor="middle" fill="#111" font-weight="normal" >1200</text><text x="468.3" y="756" font-size="10.5" text-anchor="middle" fill="#111" font-weight="normal" >1400</text><text x="524.2" y="756" font-size="10.5" text-anchor="middle" fill="#111" font-weight="normal" >1600</text><text x="580.1" y="756" font-size="10.5" text-anchor="middle" fill="#111" font-weight="normal" >1800</text><text x="636.0" y="756" font-size="10.5" text-anchor="middle" fill="#111" font-weight="normal" >2000</text><text x="72.5" y="747.4000000000001" font-size="10.5" text-anchor="end" fill="#111" font-weight="normal" >-5</text><text x="72.5" y="726.0300000000001" font-size="10.5" text-anchor="end" fill="#111" font-weight="normal" >-4</text><text x="72.5" y="704.6600000000001" font-size="10.5" text-anchor="end" fill="#111" font-weight="normal" >-3</text><text x="72.5" y="683.2900000000001" font-size="10.5" text-anchor="end" fill="#111" font-weight="normal" >-2</text><text x="72.5" y="661.9200000000001" font-size="10.5" text-anchor="end" fill="#111" font-weight="normal" >-1</text><text x="72.5" y="640.5500000000001" font-size="10.5" text-anchor="end" fill="#111" font-weight="normal" >0</text><text x="72.5" y="619.1800000000001" font-size="10.5" text-anchor="end" fill="#111" font-weight="normal" >1</text><text x="72.5" y="597.8100000000001" font-size="10.5" text-anchor="end" fill="#111" font-weight="normal" >2</text><text x="72.5" y="576.44" font-size="10.5" text-anchor="end" fill="#111" font-weight="normal" >3</text><text x="72.5" y="555.07" font-size="10.5" text-anchor="end" fill="#111" font-weight="normal" >4</text><text x="72.5" y="533.7" font-size="10.5" text-anchor="end" fill="#111" font-weight="normal" >5</text><text x="38.5" y="776" font-size="10" text-anchor="start" fill="#111" font-weight="normal" letter-spacing="0.2">Time offset:</text><text x="102" y="776" font-size="10" text-anchor="start" fill="#111" font-weight="normal" >0</text></svg>
</body></html>
